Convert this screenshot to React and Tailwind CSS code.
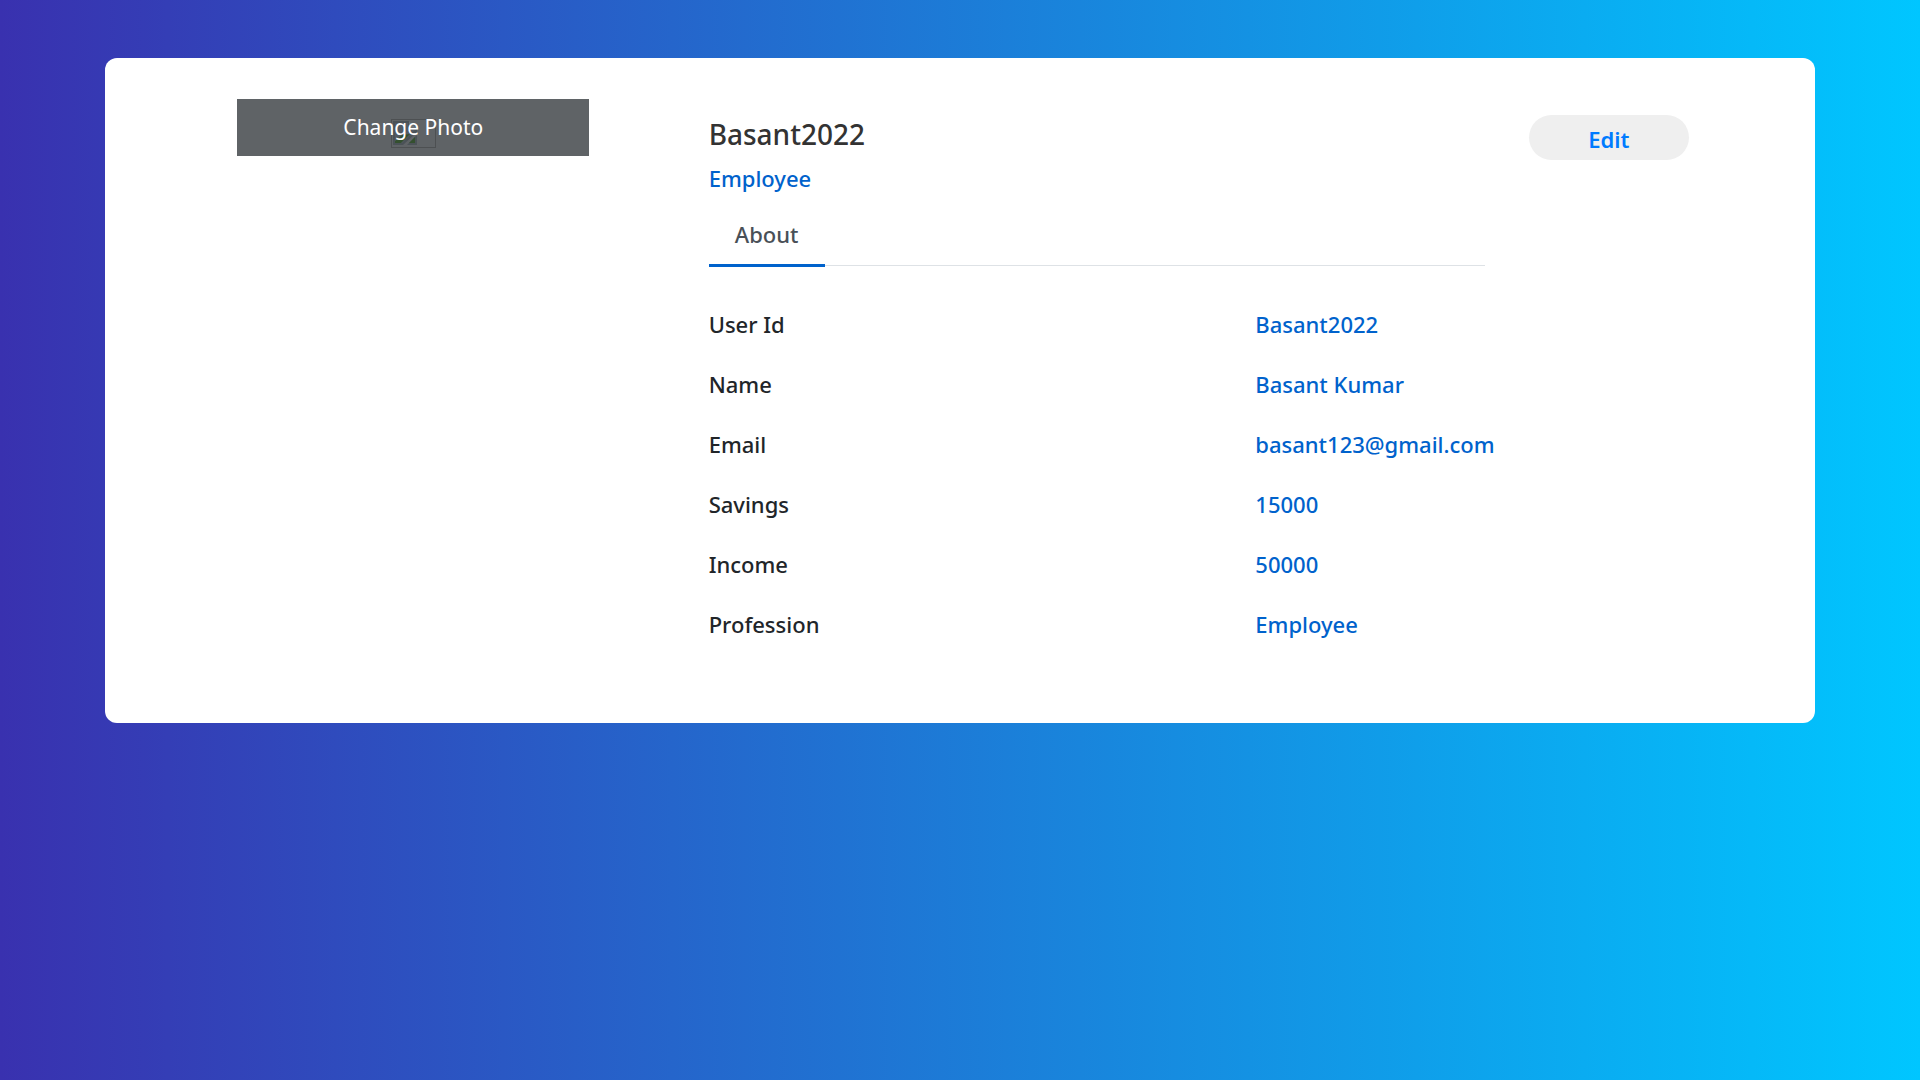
const details = [
  ["User Id", "Basant2022"],
  ["Name", "Basant Kumar"],
  ["Email", "basant123@gmail.com"],
  ["Savings", "15000"],
  ["Income", "50000"],
  ["Profession", "Employee"],
];

function MissingPhoto() {
  return (
    <svg width="45" height="29" viewBox="0 0 45 29" aria-hidden="true">
      <rect x="0.5" y="0.5" width="44" height="28" fill="none" stroke="#4d5052" />
      <path d="M2 2H18L26 10V13L12 26H2Z" fill="#4b5257" />
      <path d="M4 4H17V11H24L11 24H4Z" fill="#525a63" />
      <path d="M4 24V22L11 16L19 15L10 24Z" fill="#34502f" />
      <path d="M16 26L26 16V26Z" fill="#4b5257" />
      <path d="M18 24L24 18V24Z" fill="#34502f" />
      <path d="M18 2V10H26Z" fill="#6c7276" />
    </svg>
  );
}

function PhotoPicker() {
  return (
    <label className="relative mx-auto flex h-[57px] w-[70%] cursor-pointer justify-center bg-[#5f6366] pt-2.5 text-[21px] leading-9 text-white">
      <span className="absolute inset-0 flex items-end justify-center pb-2">
        <MissingPhoto />
      </span>
      <span className="relative">Change Photo</span>
      <input type="file" className="sr-only" />
    </label>
  );
}

export default function App() {
  return (
    <div className="min-h-screen bg-[linear-gradient(to_right,#3931af,#00c6ff)] px-[105px] pt-[58px] font-['Noto_Sans',sans-serif]">
      <main className="rounded-xl bg-white px-[35px] pt-[41px] pb-[57px] text-[22px] leading-9 font-medium">
        <div className="grid grid-cols-12">
          <div className="col-span-4 px-[22px] font-normal">
            <PhotoPicker />
          </div>
          <div className="col-span-6 px-[22px] pt-[15px]">
            <h1 className="text-[28px] leading-10 text-[#333]">Basant2022</h1>
            <p className="mt-1.5 text-[#0062cc]">Employee</p>
            <div role="tablist" className="mt-[15px] flex border-b border-[#dee2e6]">
              <button
                type="button"
                role="tab"
                aria-selected="true"
                className="-mb-0.5 h-14 w-[116px] border-b-3 border-[#0062cc] pb-2 font-medium text-[#495057]"
              >
                About
              </button>
            </div>
          </div>
          <div className="col-span-2 px-[22px] pt-4">
            <button
              type="button"
              className="h-[45px] w-[70%] rounded-full bg-[#efefef] pt-0.5 font-semibold text-[#007bff]"
            >
              Edit
            </button>
          </div>
        </div>
        <div className="mt-10 grid grid-cols-12">
          <dl className="col-span-8 col-start-5">
            {details.map(([label, value]) => (
              <div key={label} className="mb-6 grid grid-cols-2">
                <dt className="px-[22px] text-[#212529]">{label}</dt>
                <dd className="px-[22px] text-[#0062cc]">{value}</dd>
              </div>
            ))}
          </dl>
        </div>
      </main>
    </div>
  );
}
